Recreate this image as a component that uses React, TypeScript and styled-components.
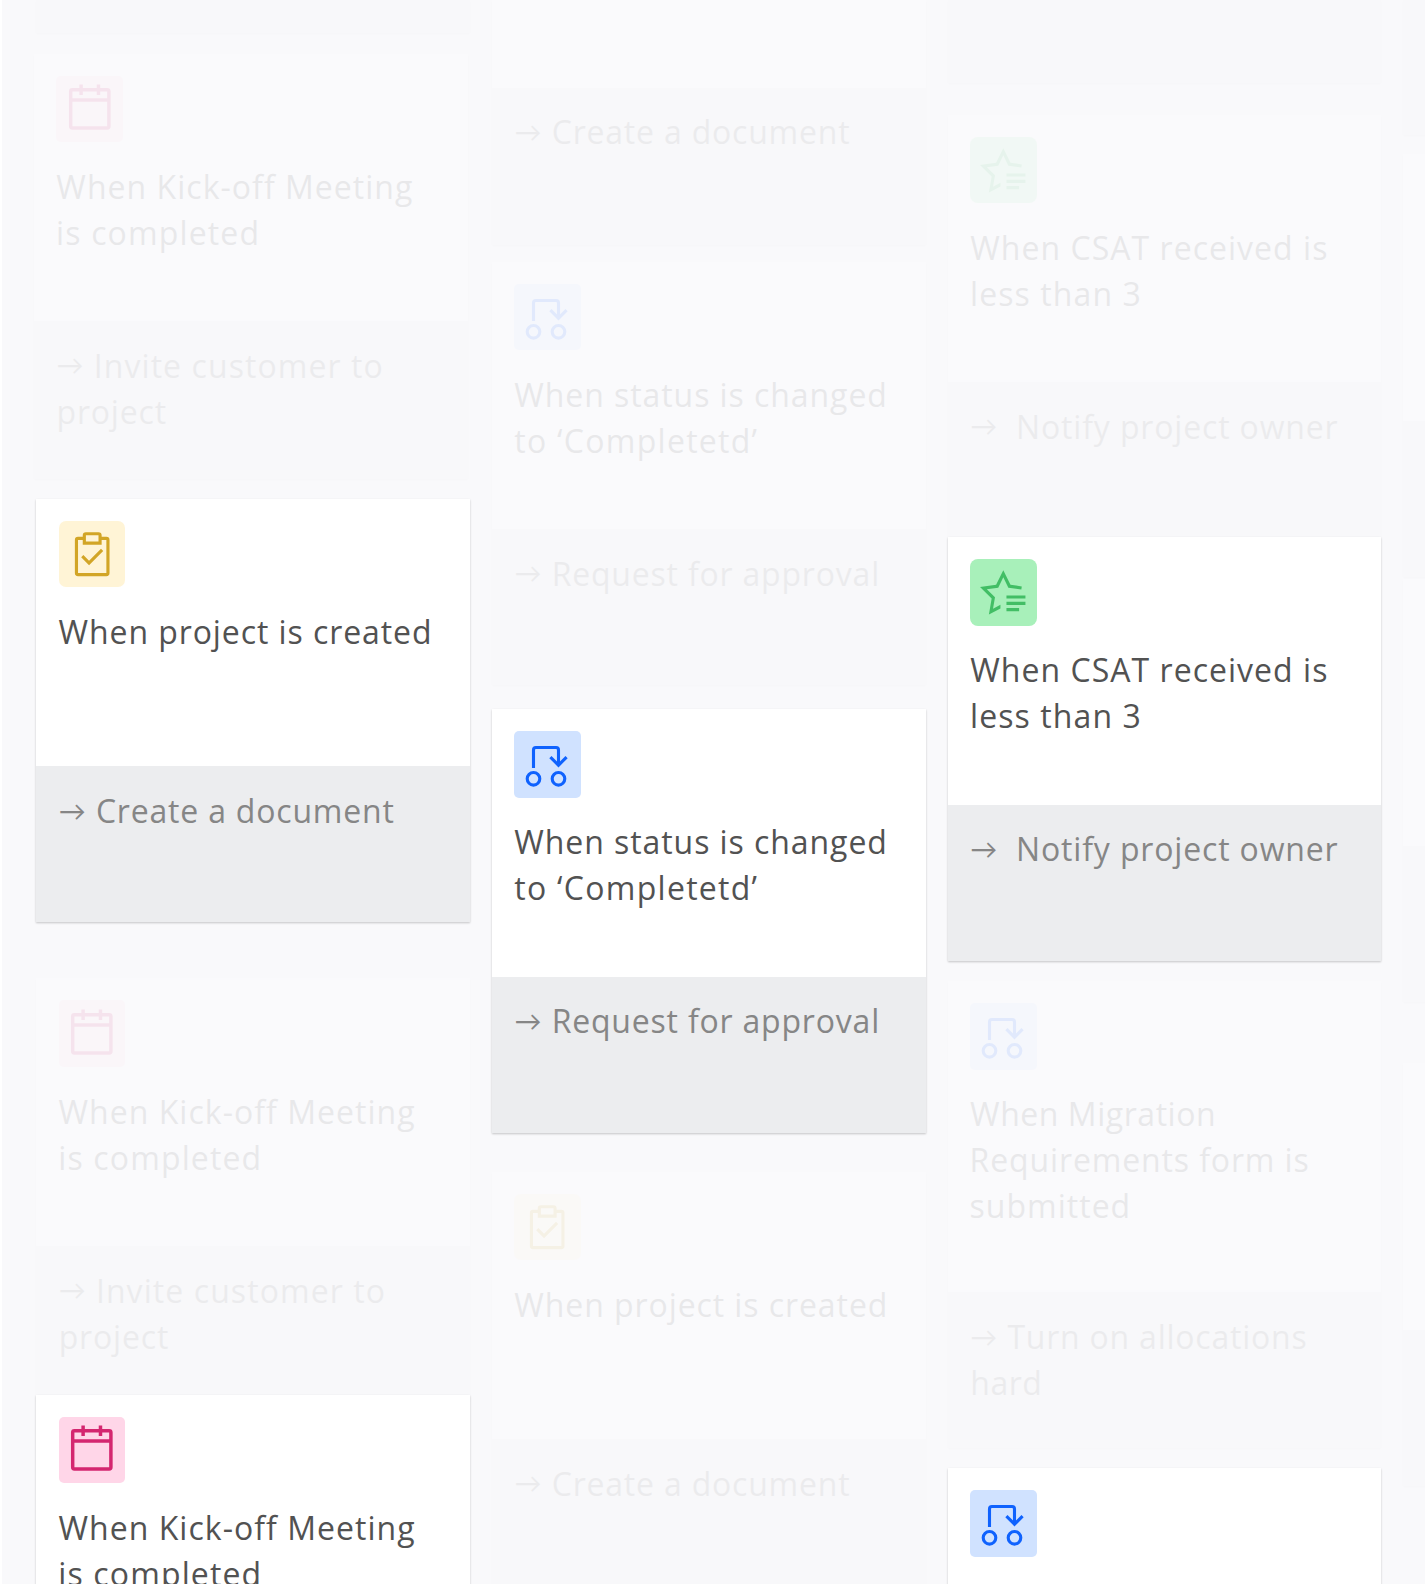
import React from 'react';
import styled, { createGlobalStyle } from 'styled-components';

const GlobalStyle = createGlobalStyle`
  *, *::before, *::after { box-sizing: border-box; }
  body { margin: 0; background: #ffffff; }
`;

const Board = styled.main`
  display: flex;
  gap: 22px;
  height: 1584px;
  margin-left: 2px;
  padding-left: 34px;
  overflow: hidden;
  background: #f9f9fb;
  font-family: 'Open Sans', 'Liberation Sans', sans-serif;
`;

const Column = styled.div`
  flex: none;
  display: flex;
  flex-direction: column;
  width: 433.8px;
`;

const Card = styled.article<{ $active?: boolean; $gap: number; $shift: number }>`
  position: relative;
  z-index: ${p => (p.$active ? 1 : 0)};
  flex: none;
  margin-top: ${p => p.$gap}px;
  margin-left: ${p => p.$shift}px;
  width: 433.8px;
  box-shadow: 0 1px 2px rgba(0, 0, 0, ${p => (p.$active ? 0.21 : 0.015)});
`;

const Trigger = styled.section<{ $height: number; $active?: boolean }>`
  height: ${p => p.$height}px;
  padding: 22px 22px 0;
  background: ${p => (p.$active ? '#ffffff' : '#fafafc')};
  overflow: hidden;
`;

const Action = styled.section<{ $height: number; $active?: boolean }>`
  height: ${p => p.$height}px;
  padding: 21.8px 22px 0 22.7px;
  background: ${p => (p.$active ? '#ecedef' : '#f8f8fa')};
  overflow: hidden;
`;

const Content = styled.div<{ $active?: boolean }>`
  display: flex;
  flex-direction: column;
  gap: 21.7px;
  opacity: ${p => (p.$active ? 1 : 0.1)};
`;

const Tile = styled.div<{ $bg: string; $radius: number }>`
  flex: none;
  width: 66.7px;
  height: 66.7px;
  margin-left: 0.5px;
  border-radius: ${p => p.$radius}px;
  background: ${p => p.$bg};
  display: flex;
  align-items: center;
  justify-content: center;
`;

const Text = styled.div<{ $muted?: boolean }>`
  color: ${p => (p.$muted ? '#868686' : '#525252')};
  font-size: 32px;
  line-height: 45.9px;
`;

const Line = styled.div<{ $spacing: number; $indent?: number }>`
  letter-spacing: ${p => p.$spacing}px;
  padding-left: ${p => p.$indent ?? 0}px;
  white-space: pre;
`;

const Arrow = styled.span<{ $width: number }>`
  display: inline-block;
  width: ${p => p.$width}px;
  font-family: Lato, sans-serif;
  font-size: 27px;
  line-height: 0;
  letter-spacing: 0;
  vertical-align: 2.6px;
`;

type Kind = 'calendar' | 'task' | 'flow' | 'review';

const tiles: Record<Kind, { bg: string; radius: number }> = {
  calendar: { bg: '#ffd6e8', radius: 5 },
  task: { bg: '#fff4d6', radius: 7 },
  flow: { bg: '#d0e2ff', radius: 5 },
  review: { bg: '#a8f0ba', radius: 8 },
};

function Glyph({ kind }: { kind: Kind }) {
  switch (kind) {
    case 'calendar':
      return (
        <svg width="55.6" height="55.6" viewBox="0 0 32 32" fill="#d4266f">
          <path d="M26,4H22V2H20V4H12V2H10V4H6A2,2,0,0,0,4,6V26a2,2,0,0,0,2,2H26a2,2,0,0,0,2-2V6A2,2,0,0,0,26,4ZM26,26H6V12H26Zm0-16H6V6h4V8h2V6h8V8h2V6h4Z" />
        </svg>
      );
    case 'task':
      return (
        <svg width="50.4" height="50.4" viewBox="0 0 32 32" fill="#d2a526">
          <path d="M14 20.18 10.41 16.59 9 18 14 23 23 14 21.59 12.58Z" />
          <path d="M25,5H22V4a2,2,0,0,0-2-2H12a2,2,0,0,0-2,2V5H7A2,2,0,0,0,5,7V28a2,2,0,0,0,2,2H25a2,2,0,0,0,2-2V7A2,2,0,0,0,25,5ZM12,4h8V8H12ZM25,28H7V7h3v3H22V7h3Z" />
        </svg>
      );
    case 'flow':
      return (
        <svg width="66.7" height="66.7" viewBox="0 0 66.7 66.7" fill="none" stroke="#0f62fe" strokeWidth="3.1">
          <circle cx="19.5" cy="47.8" r="6.3" />
          <circle cx="44.5" cy="47.8" r="6.3" />
          <path d="M19.5 37V18.9a2.4 2.4 0 0 1 2.4-2.4H42.1a2.4 2.4 0 0 1 2.4 2.4V34" />
          <path d="M36.4 26.1 44.5 34.2 52.6 26.1" />
        </svg>
      );
    case 'review':
      return (
        <svg width="50.6" height="50.6" viewBox="0 0 32 32" fill="#42be65">
          <path d="M18 18H30V20H18ZM18 22H30V24H18ZM18 26H26V28H18Z" />
          <path d="M16 2 11.45 11.22 1.28 12.69 8.64 19.87 6.9 30 14.2 26.17V23.9L9.5 26.37 10.75 19.2 5.57 14.1 12.8 13.1 16 6.5 19.2 13.1 27.4 14.3 27.7 12.3 20.55 11.22Z" />
        </svg>
      );
  }
}

type LineData = { text: string; spacing: number; indent?: number };
type CardData = {
  gap?: number;
  shift?: number;
  active?: boolean;
  kind?: Kind;
  title?: LineData[];
  action?: LineData[];
  arrowWidth?: number;
  triggerHeight?: number;
  actionHeight?: number;
};

const createDocument: LineData[] = [{ text: 'Create a document', spacing: 0.8 }];

const project: CardData = {
  kind: 'task',
  title: [{ text: 'When project is created', spacing: 0.92, indent: 0.5 }],
  action: createDocument,
};

const kickoff: CardData = {
  kind: 'calendar',
  title: [
    { text: 'When Kick-off Meeting', spacing: 1.03, indent: 0.5 },
    { text: 'is completed', spacing: 1.13, indent: 0.3 },
  ],
  action: [
    { text: 'Invite customer to', spacing: 1.08 },
    { text: 'project', spacing: 0.82 },
  ],
};

const status: CardData = {
  kind: 'flow',
  title: [
    { text: 'When status is changed', spacing: 0.93, indent: 0.5 },
    { text: 'to ‘Completetd’', spacing: 1.28, indent: 0.5 },
  ],
  action: [{ text: 'Request for approval', spacing: 0.8 }],
};

const csat: CardData = {
  kind: 'review',
  title: [
    { text: 'When CSAT received is', spacing: 1.03, indent: 0.7 },
    { text: 'less than 3', spacing: 1.1, indent: 0.4 },
  ],
  action: [{ text: 'Notify project owner', spacing: 0.84 }],
  arrowWidth: 45.8,
};

const migration: CardData = {
  kind: 'flow',
  title: [
    { text: 'When Migration', spacing: 0.54, indent: 0.5 },
    { text: 'Requirements form is', spacing: 0.87 },
    { text: 'submitted', spacing: 1.01 },
  ],
  action: [
    { text: 'Turn on allocations', spacing: 0.77 },
    { text: 'hard', spacing: 0.5 },
  ],
  triggerHeight: 311.6,
};

const columns: CardData[][] = [
  [
    { triggerHeight: 0, actionHeight: 33 },
    { ...kickoff, gap: 20.5, shift: -2.2, actionHeight: 157.5 },
    { ...project, gap: 20.2, active: true },
    { ...kickoff, gap: 55.9 },
    { ...kickoff, gap: -7.2, active: true },
  ],
  [
    { triggerHeight: 87.5, actionHeight: 157, action: createDocument },
    { ...status, gap: 17 },
    { ...status, gap: 23.9, active: true },
    { ...project, gap: 39.1 },
  ],
  [
    { triggerHeight: 0, actionHeight: 83 },
    { ...csat, gap: 31.7 },
    { ...csat, gap: -1.3, active: true },
    { ...migration, gap: 20.3 },
    { kind: 'flow', gap: 19.5, active: true },
  ],
  [
    { triggerHeight: 0, actionHeight: 134.7 },
    { gap: 19.2 },
    { gap: 1.4 },
    { gap: 60.2 },
  ],
];

function AutomationCard(props: CardData) {
  const { gap = 0, shift = 0, active, kind, title, action, arrowWidth = 37.2, triggerHeight = 267.6, actionHeight = 156 } = props;
  return (
    <Card $active={active} $gap={gap} $shift={shift}>
      {triggerHeight > 0 && (
        <Trigger $height={triggerHeight} $active={active}>
          <Content $active={active}>
            {kind && (
              <Tile $bg={tiles[kind].bg} $radius={tiles[kind].radius}>
                <Glyph kind={kind} />
              </Tile>
            )}
            {title && (
              <Text>
                {title.map(line => (
                  <Line key={line.text} $spacing={line.spacing} $indent={line.indent}>{line.text}</Line>
                ))}
              </Text>
            )}
          </Content>
        </Trigger>
      )}
      <Action $height={actionHeight} $active={active}>
        {action && (
          <Content $active={active}>
            <Text $muted>
              {action.map((line, i) => (
                <Line key={line.text} $spacing={line.spacing}>
                  {i === 0 && <Arrow $width={arrowWidth}>→</Arrow>}
                  {line.text}
                </Line>
              ))}
            </Text>
          </Content>
        )}
      </Action>
    </Card>
  );
}

export default function App() {
  return (
    <>
      <GlobalStyle />
      <Board>
        {columns.map((cards, c) => (
          <Column key={c}>
            {cards.map((card, i) => (
              <AutomationCard key={i} {...card} />
            ))}
          </Column>
        ))}
      </Board>
    </>
  );
}
